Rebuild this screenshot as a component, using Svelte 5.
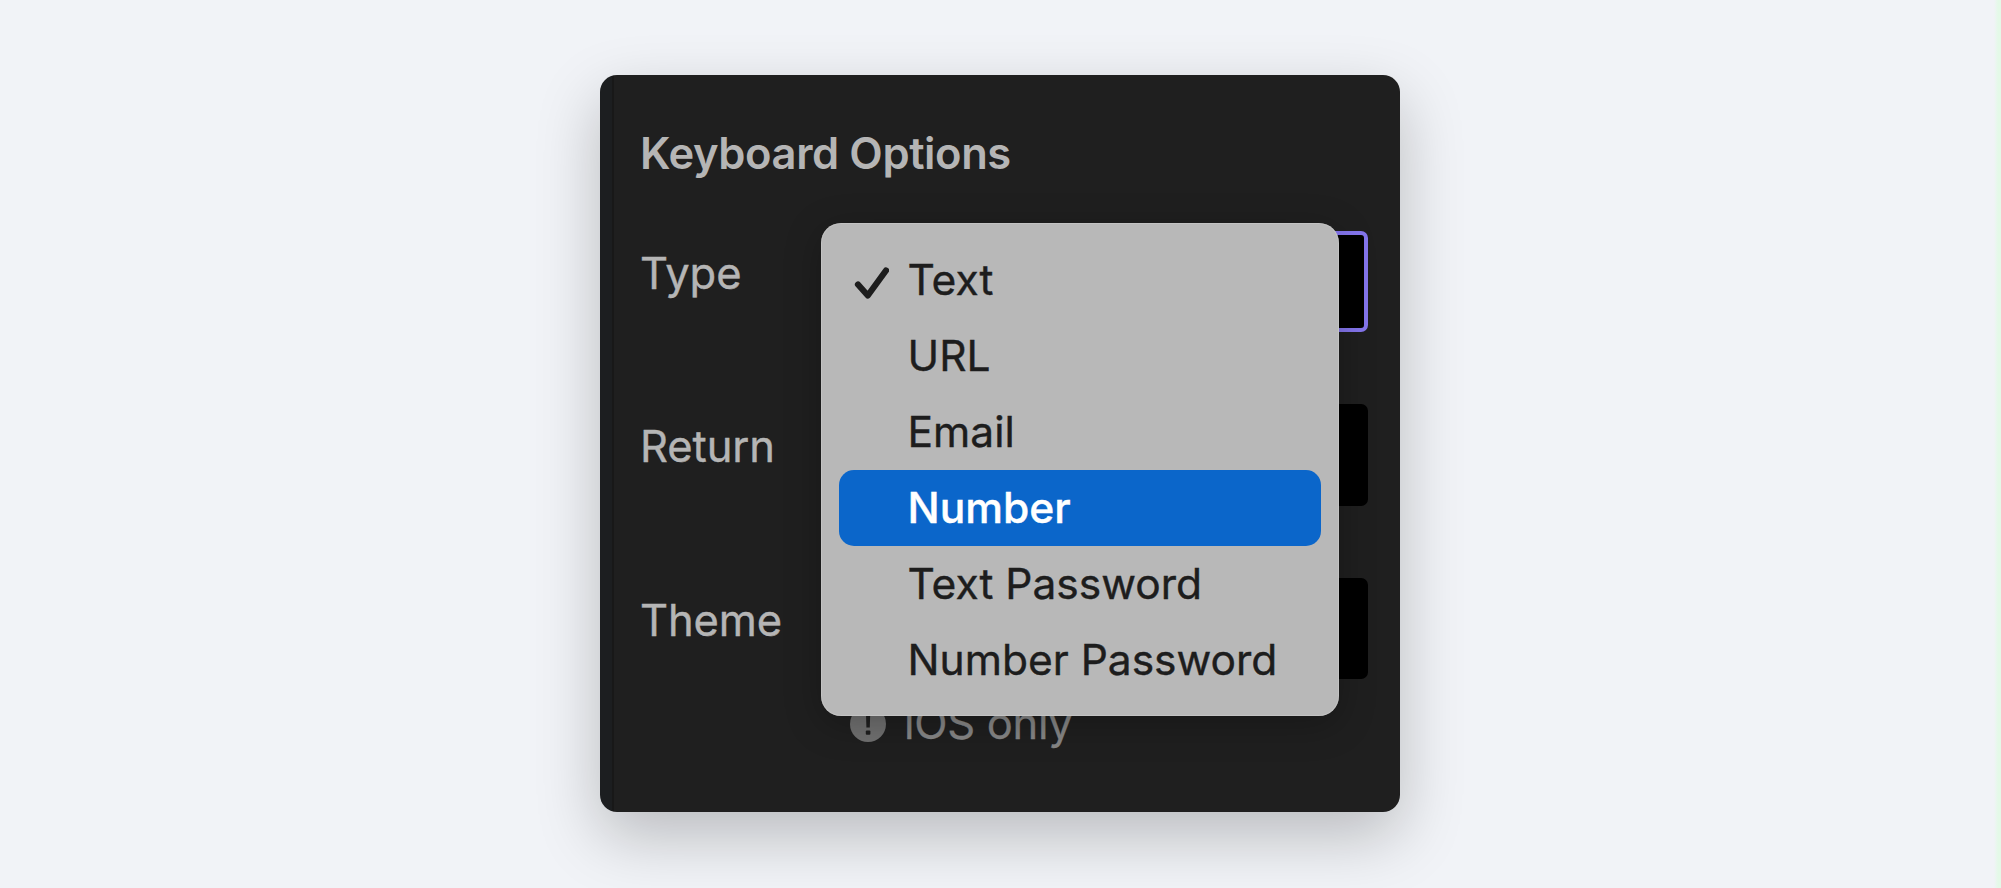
<script lang="ts">
  const fields = [
    { label: 'Type', focused: true },
    { label: 'Return', focused: false },
    { label: 'Theme', focused: false },
  ];
  const options = ['Text', 'URL', 'Email', 'Number', 'Text Password', 'Number Password'];

  let selected = $state('Text');
  let highlighted = $state('Number');
</script>

<main>
  <section class="panel">
    <h2>Keyboard Options</h2>

    {#each fields as field}
      <div class="field">
        <span class="label">{field.label}</span>
        <div class="select" class:focused={field.focused}></div>
      </div>
    {/each}

    <div class="hint">
      <svg width="36" height="36" viewBox="0 0 36 36">
        <circle cx="18" cy="18" r="18" fill="#707070" />
        <path d="M16 8h4.2l-.4 13.5h-3.4z" fill="#1f1f1f" />
        <rect x="15.8" y="24.5" width="4.6" height="4.2" rx="1" fill="#1f1f1f" />
      </svg>
      <span>iOS only</span>
    </div>

    <ul class="menu">
      {#each options as option}
        <!-- svelte-ignore a11y_click_events_have_key_events, a11y_no_noninteractive_element_interactions -->
        <li
          class:highlighted={option === highlighted}
          onmouseenter={() => (highlighted = option)}
          onclick={() => (selected = option)}
        >
          <span class="check">
            {#if option === selected}
              <svg width="36" height="40" viewBox="0 0 36 40">
                <path d="M5 24.5 L14.8 35.5 L33 10.5" />
              </svg>
            {/if}
          </span>
          <span class="text">{option}</span>
        </li>
      {/each}
    </ul>
  </section>
</main>

<style>
  :global(body) {
    background: #f1f3f7;
  }

  main {
    box-sizing: border-box;
    height: 888px;
    padding-top: 75px;
    overflow: hidden;
    background: linear-gradient(90deg, transparent calc(100% - 7px), #e4f9e8 calc(100% - 3px));
    font-family: Inter, 'Liberation Sans', sans-serif;
  }

  .panel {
    position: relative;
    box-sizing: border-box;
    width: 800px;
    height: 737px;
    margin: 0 auto 0 600px;
    padding: 52px 32.5px 0 40px;
    border-radius: 17px;
    background: linear-gradient(90deg, #1c1e20 12px, #181818 12px, #181818 14px, #1f1f1f 14px);
    box-shadow: 0 24px 64px rgba(0, 0, 0, 0.23);
    color: #b5b5b5;
  }

  h2 {
    margin: 0 0 51.5px;
    font-size: 43.5px;
    line-height: 52px;
    font-weight: 600;
    letter-spacing: -0.4px;
    white-space: nowrap;
  }

  .field {
    display: flex;
    justify-content: space-between;
    height: 101.5px;
    margin-bottom: 72.2px;
  }

  .label {
    padding-top: 16px;
    font-size: 43.5px;
    line-height: 52px;
    letter-spacing: -0.1px;
    -webkit-text-stroke: 0.4px currentColor;
  }

  .select {
    box-sizing: border-box;
    width: 518px;
    border-radius: 7px;
    background: #000;
  }

  .select.focused {
    border: 4px solid #8475ec;
  }

  .hint {
    display: flex;
    align-items: center;
    gap: 18px;
    height: 52px;
    margin: -54px 0 0 210px;
    color: #868686;
    font-size: 43.5px;
    letter-spacing: -0.3px;
  }

  .hint span {
    padding-bottom: 2px;
    -webkit-text-stroke: 0.3px currentColor;
  }

  .menu {
    position: absolute;
    top: 148px;
    left: 221px;
    box-sizing: border-box;
    width: 517.5px;
    height: 493px;
    margin: 0;
    padding: 18.5px 18px;
    border-radius: 20px;
    background: #b8b8b8;
    box-shadow: inset 0 0 0 1px rgba(205, 205, 205, 0.5), 0 8px 36px rgba(0, 0, 0, 0.25);
    list-style: none;
  }

  li {
    display: flex;
    align-items: center;
    height: 76px;
    border-radius: 15px;
    color: #1d1d1d;
    font-size: 42.5px;
    white-space: nowrap;
  }

  li.highlighted {
    background: #0b66ca;
    color: #fff;
    font-weight: 500;
  }

  .text {
    -webkit-text-stroke: 0.4px currentColor;
  }

  .check {
    width: 54.5px;
    height: 40px;
    padding-left: 14px;
  }

  .check svg {
    display: block;
  }

  .check path {
    fill: none;
    stroke: #1d1d1d;
    stroke-width: 6.2;
    stroke-linecap: round;
    stroke-linejoin: round;
  }
</style>
